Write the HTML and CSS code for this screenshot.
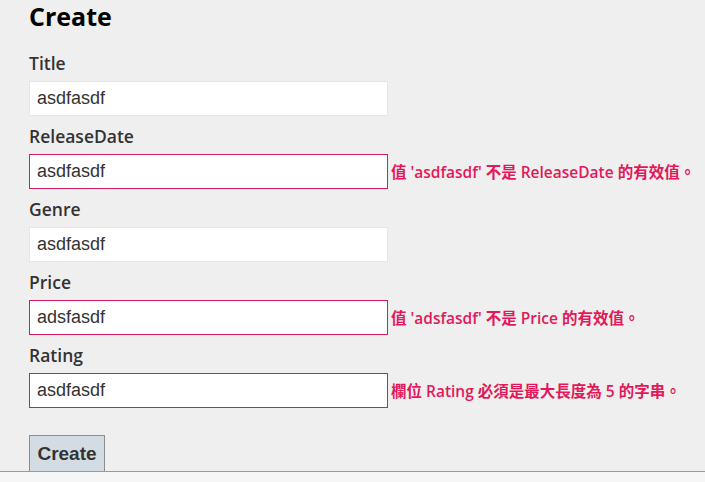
FILE: index.html
```html
<!DOCTYPE html>
<html>
<head>
<meta charset="utf-8">
<link rel="stylesheet" href="styles.css">
</head>
<body>
<main class="page">
  <h2 class="title">Create</h2>
  <form class="form">
    <div class="field">
      <label class="label">Title</label>
      <div class="row"><span class="box"><input class="input" type="text" value="asdfasdf"></span></div>
    </div>
    <div class="field">
      <label class="label">ReleaseDate</label>
      <div class="row"><span class="box invalid"><input class="input" type="text" value="asdfasdf"></span><span class="error">值 'asdfasdf' 不是 ReleaseDate 的有效值。</span></div>
    </div>
    <div class="field">
      <label class="label">Genre</label>
      <div class="row"><span class="box"><input class="input" type="text" value="asdfasdf"></span></div>
    </div>
    <div class="field">
      <label class="label">Price</label>
      <div class="row"><span class="box invalid"><input class="input" type="text" value="adsfasdf"></span><span class="error">值 'adsfasdf' 不是 Price 的有效值。</span></div>
    </div>
    <div class="field">
      <label class="label">Rating</label>
      <div class="row"><span class="box invalid"><input class="input" type="text" value="asdfasdf"></span><span class="error">欄位 Rating 必須是最大長度為 5 的字串。</span></div>
    </div>
    <div class="actions"><button type="button" class="btn">Create</button></div>
  </form>
</main>
<div class="footer-bar"></div>
</body>
</html>
```
FILE: styles.css
```css
html, body {
  margin: 0;
  padding: 0;
  background: #efefef;
  overflow: hidden;
}
.page {
  padding: 0 0 0 29px;
  font-family: "Open Sans", "Noto Sans CJK TC", sans-serif;
  color: #333;
}
.title {
  margin: 0 0 19px 0;
  font-size: 25px;
  line-height: 32px;
  font-weight: 700;
  color: #000;
}
.form {
  display: flex;
  flex-direction: column;
}
.field {
  display: flex;
  flex-direction: column;
  margin-bottom: 8px;
}
.label {
  font-size: 17.5px;
  line-height: 24px;
  font-weight: 600;
  color: #333;
  margin-bottom: 6px;
}
.row {
  display: flex;
  align-items: center;
  gap: 3px;
}
.box {
  display: block;
  box-sizing: border-box;
  width: 359px;
  height: 35px;
  border: 1px solid #e6e6e6;
  background: #fff;
}
.box.invalid {
  border-color: #d81a5e;
}
.input {
  -webkit-appearance: none;
  appearance: none;
  box-sizing: border-box;
  display: block;
  width: 100%;
  height: 100%;
  margin: 0;
  padding: 0 7px;
  border: 0;
  background: transparent;
  font-family: "Liberation Sans", Arial, sans-serif;
  font-size: 18px;
  color: #333;
  outline: none;
}
.error {
  font-family: "Open Sans", "Noto Sans CJK TC", sans-serif;
  font-size: 15.5px;
  font-weight: 600;
  color: #e2185b;
  white-space: nowrap;
}
.actions {
  margin-top: 19px;
}
.btn {
  box-sizing: border-box;
  width: 76px;
  height: 40px;
  padding: 0;
  border: 1px solid #8c8c8c;
  border-radius: 0;
  background: #d3dce3;
  font-family: "Liberation Sans", Arial, sans-serif;
  font-size: 19px;
  font-weight: 700;
  color: #333;
  line-height: 36px;
  display: flex;
  justify-content: center;
  align-items: flex-start;
}
.footer-bar {
  position: fixed;
  left: 0;
  right: 0;
  bottom: 0;
  height: 10px;
  background: #f6f6f6;
  border-top: 1px solid #9a9a9a;
}
```
